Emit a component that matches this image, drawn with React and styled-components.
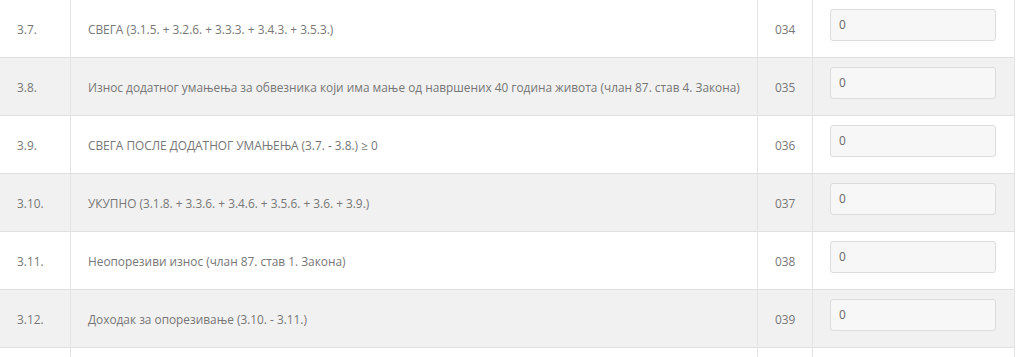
import React from "react";
import styled, { createGlobalStyle } from "styled-components";

const Global = createGlobalStyle`
  html, body { margin: 0; padding: 0; background: #fff; }
  body { font-family: "Open Sans", "Noto Sans", sans-serif; font-size: 11.85px; color: #777; overflow: hidden; }
`;

const Table = styled.div`
  width: 1014px;
  margin-top: -1px;
  border-right: 1px solid #e4e4e4;
`;

const Row = styled.div`
  display: grid;
  grid-template-columns: 70px 687px 55px 201px;
  height: 57px;
  border-top: 1px solid #e0e0e0;
  background: ${(p) => (p.$striped ? "#f1f1f1" : "#fff")};
`;

const Cell = styled.div`
  display: flex;
  align-items: center;
  padding: 0 17px;
  border-left: ${(p) => (p.$first ? "none" : "1px solid #e4e4e4")};
  white-space: nowrap;
  line-height: 18px;
`;

const InputCell = styled.div`
  padding: 9px 17px 0 17px;
  border-left: 1px solid #e4e4e4;
`;

const Field = styled.div`
  box-sizing: border-box;
  height: 32px;
  width: 166px;
  background: #f7f7f7;
  border: 1px solid #dcdcdc;
  border-radius: 3px;
  padding: 5px 8px 0;
  line-height: 18px;
  color: #666;
`;

const rows = [
  ["3.7.", "СВЕГА (3.1.5. + 3.2.6. + 3.3.3. + 3.4.3. + 3.5.3.)", "034"],
  ["3.8.", "Износ додатног умањења за обвезника који има мање од навршених 40 година живота (члан 87. став 4. Закона)", "035"],
  ["3.9.", "СВЕГА ПОСЛЕ ДОДАТНОГ УМАЊЕЊА (3.7. - 3.8.) ≥ 0", "036"],
  ["3.10.", "УКУПНО (3.1.8. + 3.3.6. + 3.4.6. + 3.5.6. + 3.6. + 3.9.)", "037"],
  ["3.11.", "Неопорезиви износ (члан 87. став 1. Закона)", "038"],
  ["3.12.", "Доходак за опорезивање (3.10. - 3.11.)", "039"],
  ["", "", ""],
];

export default function App() {
  return (
    <>
      <Global />
      <Table>
        {rows.map((r, i) => (
          <Row key={i} $striped={i % 2 === 1}>
            <Cell $first>{r[0]}</Cell>
            <Cell>{r[1]}</Cell>
            <Cell>{r[2]}</Cell>
            <InputCell>{r[2] && <Field>0</Field>}</InputCell>
          </Row>
        ))}
      </Table>
    </>
  );
}
